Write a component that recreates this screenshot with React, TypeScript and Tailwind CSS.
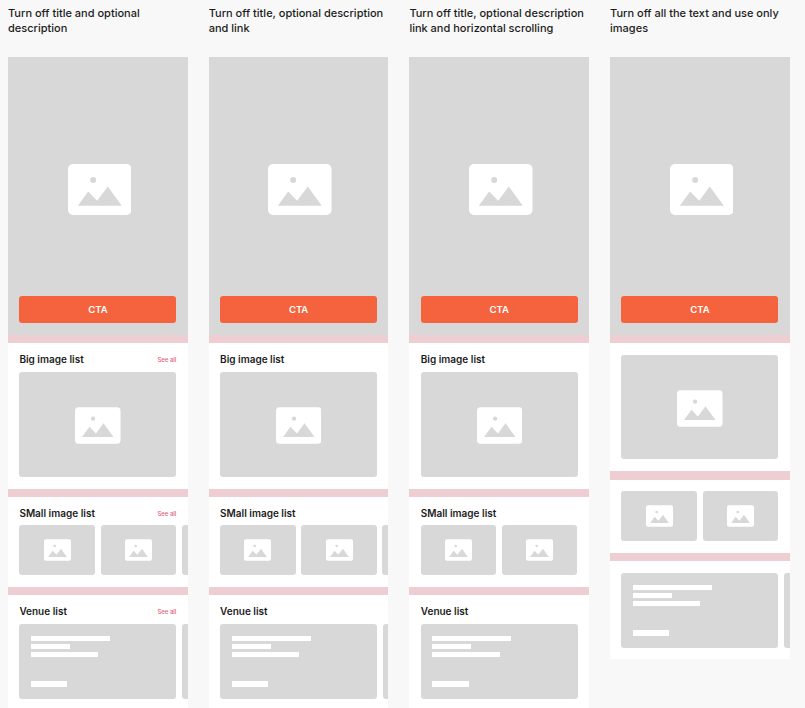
function ImageIcon({ className }: { className: string }) {
  return (
    <svg viewBox="0 0 63.5 51" className={className}>
      <rect width="63.5" height="51" rx="5" fill="#fff" />
      <circle cx="25.2" cy="16" r="3" fill="#d8d8d8" />
      <polygon points="9.8,41.7 20.2,27.4 29.2,36.7 39.8,22.4 53.8,41.7" fill="#d8d8d8" />
    </svg>
  )
}

function Divider({ thick }: { thick?: boolean }) {
  return <div className={thick ? 'h-[8.5px] shrink-0 bg-[#eecdd3]' : 'h-[8px] shrink-0 bg-[#eecdd3]'} />
}

function Header({ title, link, short }: { title: string; link: boolean; short?: boolean }) {
  return (
    <div className={short ? 'flex h-[28px] w-[157px] items-start justify-between pt-[9.5px]' : 'flex h-[29px] w-[157px] items-start justify-between pt-[9.5px]'}>
      <span className="text-[10px] leading-[13px] font-semibold text-[#1c1c1c]">{title}</span>
      {link && <span className="pt-[3.5px] text-[6px] leading-[8px] font-medium text-[#e2607a]">See all</span>}
    </div>
  )
}

function BigCard() {
  return (
    <div className="flex h-[104.5px] w-[157px] items-center justify-center rounded-[3px] bg-[#d8d8d8] pt-[3px]">
      <ImageIcon className="h-[37px] w-[45.5px]" />
    </div>
  )
}

function Thumbs({ peek }: { peek: boolean }) {
  return (
    <div className="flex w-[180px] gap-[5.7px]">
      {[0, 1, 2].slice(0, peek ? 3 : 2).map((i) => (
        <div key={i} className="flex h-[50px] w-[75.5px] shrink-0 items-center justify-center rounded-[3px] bg-[#d8d8d8]">
          <ImageIcon className="h-[22px] w-[27px]" />
        </div>
      ))}
    </div>
  )
}

function VenueCards({ peek }: { peek: boolean }) {
  return (
    <div className="flex w-[180px] gap-[5.7px]">
      <div className="flex h-[75px] w-[157px] shrink-0 flex-col items-start rounded-[3px] bg-[#d8d8d8] px-[11.5px] pt-[11.5px] pb-[12px]">
        <div className="h-[5.5px] w-[79px] bg-white" />
        <div className="mt-[3px] h-[5px] w-[39px] bg-white" />
        <div className="mt-[3px] h-[4.5px] w-[67.5px] bg-white" />
        <div className="mt-auto h-[6px] w-[36.5px] bg-white" />
      </div>
      {peek && <div className="h-[75px] w-[157px] shrink-0 rounded-[3px] bg-[#d8d8d8]" />}
    </div>
  )
}

function Hero() {
  return (
    <div className="flex h-[278px] shrink-0 flex-col items-center bg-[#d8d8d8] pt-[107px] pr-[11.3px] pb-[12px] pl-[11.4px]">
      <ImageIcon className="ml-[3px] h-[51px] w-[63.5px]" />
      <button className="mt-auto h-[27px] w-full rounded-[3px] bg-[#f4633e] pt-[1px] text-[9.5px] font-semibold text-white">
        CTA
      </button>
    </div>
  )
}

type Col = { title: string; link: boolean; thumbPeek: boolean; venuePeek: boolean }

const columns: Col[] = [
  { title: 'Turn off title and optional description', link: true, thumbPeek: true, venuePeek: true },
  { title: 'Turn off title, optional description and link', link: false, thumbPeek: true, venuePeek: true },
  { title: 'Turn off title, optional description link and horizontal scrolling', link: false, thumbPeek: false, venuePeek: false },
]

function ColumnTitle({ children }: { children: string }) {
  return <h2 className="h-[57px] shrink-0 pt-[6px] text-[11px] leading-[15px] font-medium text-[#1c1c1c]">{children}</h2>
}

function TitledColumn({ col }: { col: Col }) {
  return (
    <div className="flex h-[708px] w-[179.7px] shrink-0 flex-col">
      <ColumnTitle>{col.title}</ColumnTitle>
      <Hero />
      <Divider />
      <div className="overflow-hidden bg-white pb-[12px] pl-[11.4px]">
        <Header title="Big image list" link={col.link} />
        <BigCard />
      </div>
      <Divider thick />
      <div className="overflow-hidden bg-white pb-[12px] pl-[11.4px]">
        <Header title="SMall image list" link={col.link} short />
        <Thumbs peek={col.thumbPeek} />
      </div>
      <Divider />
      <div className="flex-1 overflow-hidden bg-white pl-[11.4px]">
        <Header title="Venue list" link={col.link} />
        <VenueCards peek={col.venuePeek} />
      </div>
    </div>
  )
}

function ImagesColumn() {
  return (
    <div className="flex h-[659px] w-[179.7px] shrink-0 flex-col">
      <ColumnTitle>Turn off all the text and use only images</ColumnTitle>
      <Hero />
      <Divider />
      <div className="overflow-hidden bg-white pt-[11.5px] pb-[12px] pl-[11.4px]">
        <BigCard />
      </div>
      <Divider thick />
      <div className="overflow-hidden bg-white pt-[11.5px] pb-[12px] pl-[11.4px]">
        <Thumbs peek={false} />
      </div>
      <Divider />
      <div className="flex-1 overflow-hidden bg-white pt-[12px] pl-[11.4px]">
        <VenueCards peek />
      </div>
    </div>
  )
}

export default function App() {
  return (
    <div className="flex h-[708px] w-[805px] gap-[21px] overflow-hidden bg-[#f8f8f8] pl-[8px] font-['Inter',sans-serif]">
      {columns.map((col) => (
        <TitledColumn key={col.title} col={col} />
      ))}
      <ImagesColumn />
    </div>
  )
}
